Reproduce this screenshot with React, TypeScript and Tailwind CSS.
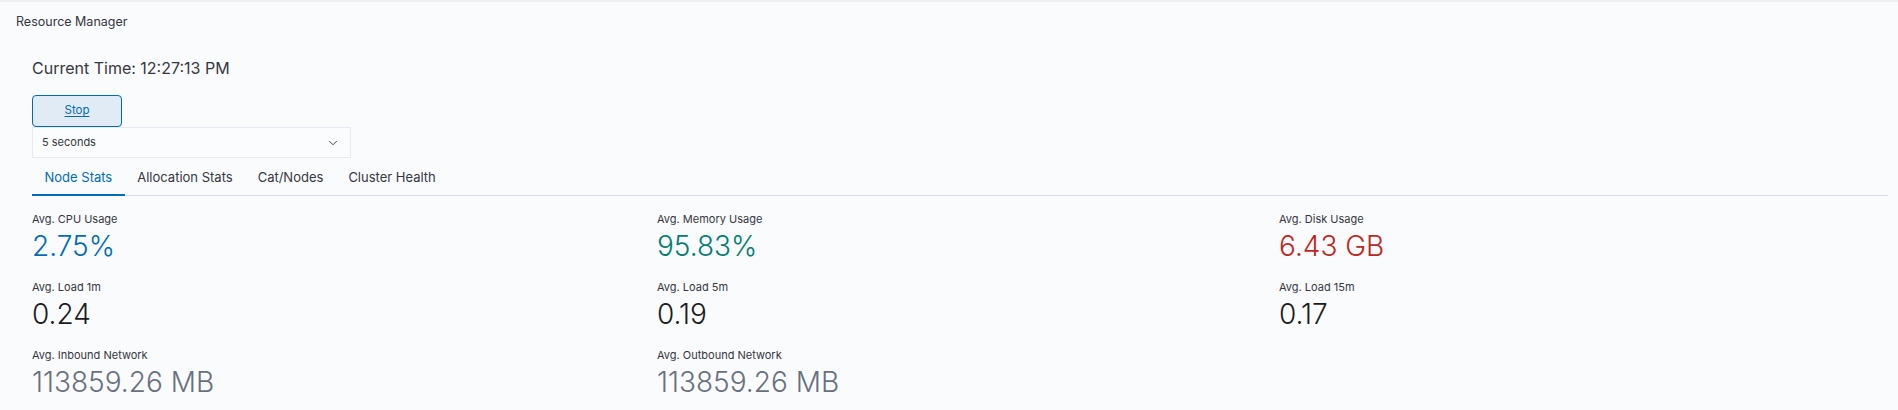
import { ChevronDown } from "lucide-react";

const stats = [
  { label: "Avg. CPU Usage", value: "2.75%", color: "text-[#006bb8]" },
  { label: "Avg. Memory Usage", value: "95.83%", color: "text-[#017d73]" },
  { label: "Avg. Disk Usage", value: "6.43 GB", color: "text-[#bd271e]" },
  { label: "Avg. Load 1m", value: "0.24", color: "text-[#1a1c21]" },
  { label: "Avg. Load 5m", value: "0.19", color: "text-[#1a1c21]" },
  { label: "Avg. Load 15m", value: "0.17", color: "text-[#1a1c21]" },
  { label: "Avg. Inbound Network", value: "113859.26 MB", color: "text-[#69707d]" },
  { label: "Avg. Outbound Network", value: "113859.26 MB", color: "text-[#69707d]" },
];

const tabs = ["Node Stats", "Allocation Stats", "Cat/Nodes", "Cluster Health"];

export default function App() {
  return (
    <div
      className="min-h-[410px] w-full bg-[#fafbfd] border-t-2 border-[#eef0f4] text-[#343741]"
      style={{ fontFamily: "Inter, 'Noto Sans', sans-serif" }}
    >
      <div className="pl-4 pt-[10px] text-[12.5px] leading-5 text-[#343741]">Resource Manager</div>

      <div className="pl-8 pr-[10px] pt-[24px]">
        <h2 className="text-[16px] leading-6 text-[#343741]">Current Time: 12:27:13 PM</h2>

        <button className="mt-[15px] flex h-8 w-[90px] items-center justify-center rounded-[4px] border border-[#006bb8] bg-[#e1ebf5] text-[11.5px] text-[#006bb8] underline underline-offset-2">
          Stop
        </button>

        <div className="flex h-[31px] w-[319px] items-center justify-between border border-[#e6ebf2] bg-[#fbfcfd] pl-[9px] pr-[10px] text-[11px] text-[#343741]">
          <span>5 seconds</span>
          <ChevronDown size={14} strokeWidth={1.6} className="text-[#343741]" />
        </div>

        <div className="flex h-[38px] border-b border-[#d3dae6]">
          {tabs.map((t, i) => (
            <div
              key={t}
              className={
                "flex items-center px-[12.5px] pt-[4px] text-[13px] -mb-px " +
                (i === 0
                  ? "border-b-2 border-[#006bb8] text-[#006bb8]"
                  : "border-b-2 border-transparent text-[#343741]")
              }
            >
              {t}
            </div>
          ))}
        </div>

        <div className="grid grid-cols-[625px_622px_1fr] gap-y-[16px] pt-[14px]">
          {stats.map((s) => (
            <div key={s.label}>
              <div className="text-[11px] leading-[18px] text-[#343741]">{s.label}</div>
              <div className={"mt-[2px] text-[28px] font-light leading-[32px] " + s.color}>{s.value}</div>
            </div>
          ))}
        </div>
      </div>
    </div>
  );
}
